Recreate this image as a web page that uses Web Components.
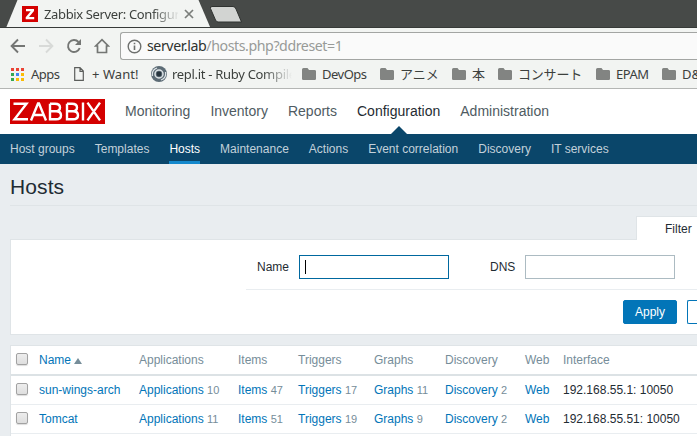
<!DOCTYPE html>
<html lang="en">
<head>
<meta charset="utf-8">
<title>Zabbix Server: Configuration of hosts</title>
<style>
html,body{margin:0;height:100%;overflow:hidden}
body{background:#e9edf0;font-family:"Liberation Sans",Arial,sans-serif;font-size:12px;color:#1f2c33}
</style>
</head>
<body>
<browser-chrome></browser-chrome>
<zbx-page></zbx-page>
<script>
function define(name, html) {
  const t = document.createElement('template');
  t.innerHTML = html;
  customElements.define(name, class extends HTMLElement {
    constructor() {
      super();
      this.attachShadow({mode: 'open'}).append(t.content.cloneNode(true));
    }
  });
}

define('tab-strip', `
<style>
:host{display:block;height:28px;overflow:hidden;background:#474a48;position:relative;box-sizing:border-box;border-bottom:1px solid #373a38}
svg.shape{position:absolute;left:0;top:0}
.tab{position:relative;display:flex;align-items:center;height:28px;padding-left:22px}
.title{margin-left:6px;width:134px;overflow:hidden;white-space:nowrap;font-size:13px;line-height:18px;letter-spacing:-.36px;color:#3c403d;-webkit-mask-image:linear-gradient(90deg,#000 108px,transparent 136px);mask-image:linear-gradient(90deg,#000 108px,transparent 136px)}
.close{margin-left:5px}
</style>
<svg class="shape" width="260" height="28"><path d="M6 28L17.500 0H198.500L210.500 28Z" fill="#f2f4f2"/><path d="M212 6.500H233Q235 6.500 236 9L241.500 22H218Q216.500 22 215.500 20L210.500 8.500Q210 6.500 212 6.500Z" fill="#d2d4d2" stroke="#2f3230"/></svg>
<div class="tab">
<svg width="16" height="16"><rect width="16" height="16" fill="#d40000"/><path d="M4 3H12V5L7 11H12.200V13.200H3.700V11.200L8.700 5.200H4Z" fill="#fff"/></svg>
<span class="title">Zabbix Server: Configuration</span>
<svg class="close" width="12" height="12"><path d="M2 2L10 10M10 2L2 10" stroke="#7b7e7b" stroke-width="1.700"/></svg>
</div>`);

define('nav-bar', `
<style>
:host{display:flex;align-items:center;height:36px;box-sizing:border-box;padding:0 0 0 10px}
.ic{flex:none;width:16px;height:16px;margin-right:12px}
.box{flex:1;min-width:0;height:28px;box-sizing:border-box;border:1px solid #a3a5a3;border-right:0;border-radius:3px 0 0 3px;background:#fafafa;display:flex;align-items:center;padding-left:6px;color:#2e3230;font-size:14.200px;letter-spacing:-.43px}
.box svg{margin-right:5px;flex:none}
.box span{white-space:nowrap;line-height:20px}
.dim{color:#989a98}
</style>
<svg class="ic" viewBox="0 0 16 16"><path d="M15 8H2M8 1.500L1.600 8L8 14.500" fill="none" stroke="#747674" stroke-width="1.900"/></svg>
<svg class="ic" viewBox="0 0 16 16"><path d="M1 8H14M8 1.500L14.400 8L8 14.500" fill="none" stroke="#d8dad8" stroke-width="1.900"/></svg>
<svg class="ic" viewBox="0 0 16 16"><path d="M13.700 10A6 6 0 1 1 12.500 4" fill="none" stroke="#747674" stroke-width="1.900"/><path d="M15 1V7H9Z" fill="#747674"/></svg>
<svg class="ic" style="margin-right:10px" viewBox="0 0 16 16"><path d="M3.500 8V14.500H12.500V8H14.300L8 1.700L1.700 8Z" fill="none" stroke="#747674" stroke-width="1.700"/></svg>
<div class="box"><svg width="15" height="15"><circle cx="7.500" cy="7.500" r="6.300" fill="none" stroke="#6e706e" stroke-width="1.400"/><path d="M7.500 6.500V11M7.500 3.700V5.300" stroke="#6e706e" stroke-width="1.600"/></svg><span>server.lab<span class="dim">/hosts.php?ddreset=1</span></span></div>`);

define('bookmark-item', `
<style>
:host{display:flex;align-items:center;flex:none;white-space:nowrap;overflow:hidden;box-sizing:border-box;line-height:18px}
::slotted(svg){flex:none}
</style>
<slot name="icon"></slot><slot></slot>`);

const folder = '<svg slot="icon" width="14" height="12" style="margin-right:6px"><path d="M1.500 0H5.500L7 2H12.500Q14 2 14 3.300V10.700Q14 12 12.700 12H1.300Q0 12 0 10.700V1.500Q0 0 1.500 0Z" fill="#828482"/></svg>';
let dots = '';
['#ea4335','#ea4335','#ea4335','#34a853','#4285f4','#fbbc05','#34a853','#fbbc05','#fbbc05'].forEach((c, i) => {
  dots += '<rect x="' + (i % 3) * 5 + '" y="' + Math.floor(i / 3) * 5 + '" width="3" height="3" fill="' + c + '"/>';
});
define('bookmark-bar', `
<style>
:host{display:flex;height:25px;box-sizing:border-box;padding:0 0 4px 11px;border-bottom:1px solid #b4b6b4;overflow:hidden;font-size:13px;color:#3c403d}
.fade{-webkit-mask-image:linear-gradient(90deg,#000 112px,transparent 141px);mask-image:linear-gradient(90deg,#000 112px,transparent 141px)}
.last{flex:1 1 0;min-width:0}
</style>
<bookmark-item style="width:63px"><svg slot="icon" width="13" height="13" style="margin-right:7px">${dots}</svg><span style="letter-spacing:-.55px">Apps</span></bookmark-item>
<bookmark-item style="width:77px"><svg slot="icon" width="10" height="14" style="margin-right:8px"><path d="M.7 .7H6L9.300 4V13.300H.7ZM6 .7V4.300H9.300" fill="none" stroke="#5c5e5c" stroke-width="1.200"/></svg><span style="letter-spacing:.05px">+ Want!</span></bookmark-item>
<bookmark-item class="fade" style="width:151px"><svg slot="icon" width="16" height="16" style="margin-right:5px"><circle cx="8" cy="8" r="8" fill="#5d6c76"/><circle cx="8" cy="8" r="4" fill="none" stroke="#dfe5e8" stroke-width="1.500"/><circle cx="8" cy="8" r="2.400" fill="#26343d"/><path d="M1.500 10Q.5 4 6 2M14.500 6Q15.500 12 10 14" fill="none" stroke="#dfe5e8" stroke-width="1.200"/></svg><span style="letter-spacing:-.3px">repl.it - Ruby Compiler</span></bookmark-item>
<bookmark-item style="width:78px">${folder}<span style="letter-spacing:-.5px">DevOps</span></bookmark-item>
<bookmark-item style="width:72px">${folder}<span>アニメ</span></bookmark-item>
<bookmark-item style="width:46px">${folder}<span>本</span></bookmark-item>
<bookmark-item style="width:98px">${folder}<span style="letter-spacing:-.2px">コンサート</span></bookmark-item>
<bookmark-item style="width:66px">${folder}<span style="letter-spacing:-.5px">EPAM</span></bookmark-item>
<bookmark-item class="last">${folder}<span>D&amp;D</span></bookmark-item>`);

define('browser-chrome', `
<style>:host{display:block;height:89px;background:#f2f4f2;font-family:"Noto Sans","Noto Sans CJK JP",sans-serif}</style>
<tab-strip></tab-strip><nav-bar></nav-bar><bookmark-bar></bookmark-bar>`);

define('main-menu', `
<style>
:host{display:flex;align-items:center;height:45px;background:#fff;padding-left:10px;font-size:14px;color:#4f5b62}
.logo{width:95px;height:25px;background:#d40000;margin-right:20px;flex:none}
a{margin-right:20px;white-space:nowrap;position:relative;line-height:45px}
.on{color:#1f2c33}
.on::after{content:"";position:absolute;left:50%;bottom:0;margin-left:-8px;border:8px solid transparent;border-top:0;border-bottom-color:#0a466a}
</style>
<svg class="logo" viewBox="0 0 95 25"><path d="M3.500 4.700H16.500L4.500 20.300H18M21 21.500L28 4.500H29L36 21.500M23.500 16H33.500M40 4.700V20.300H46Q51 20.300 51 16.300Q51 12.200 46 12.200H40M40 4.700H45Q50 4.700 50 8.400Q50 12.200 45 12.200M57 4.700V20.300H63Q68 20.300 68 16.300Q68 12.200 63 12.200H57M57 4.700H62Q67 4.700 67 8.400Q67 12.200 62 12.200M73 3.600V21.400M77.500 3.600L90 21.400M90 3.600L77.500 21.400" fill="none" stroke="#fff" stroke-width="2.400"/></svg>
<a>Monitoring</a><a>Inventory</a><a>Reports</a><a class="on">Configuration</a><a>Administration</a>`);

define('sub-menu', `
<style>
:host{display:flex;height:30px;background:#0a466a;padding-left:10px;color:#c3d1da}
a{margin-right:20px;white-space:nowrap;line-height:30px;box-sizing:border-box;height:30px}
.on{color:#fff;border-bottom:3px solid #1488cc}
</style>
<a>Host groups</a><a>Templates</a><a class="on">Hosts</a><a>Maintenance</a><a>Actions</a><a>Event correlation</a><a>Discovery</a><a>IT services</a>`);

define('page-title', `
<style>:host{display:block;height:41px;margin-left:10px;border-bottom:1px solid #dfe4e7}
h1{margin:0;font-size:21px;font-weight:400;line-height:46px;letter-spacing:.1px}</style>
<h1><slot></slot></h1>`);

define('field-box', `
<style>
:host{display:flex;align-items:center}
label{text-align:right;margin-right:10px}
.in{width:150px;height:24px;box-sizing:border-box;border:1px solid #acbbc2;background:#fff;padding:4px 5px}
:host([focused]) .in{border-color:#00689f}
:host([focused]) .in::before{content:"";display:block;width:1px;height:14px;background:#000}
</style>
<label><slot></slot></label><div class="in"></div>`);

define('filter-panel', `
<style>
:host{display:block;margin:10px 0 0 10px}
.tab{position:relative;margin-left:626px;height:24px;margin-bottom:-1px;box-sizing:border-box;border:1px solid #dfe4e7;border-bottom:0;border-right:0;background:#fff;padding-left:28px;line-height:25px}
.body{box-sizing:border-box;height:96px;border:1px solid #dfe4e7;border-right:0;background:#fff;padding-left:235px;overflow:hidden}
.row{display:flex;align-items:center;height:50px;padding:5px 0 0 11px;box-sizing:border-box;border-bottom:1px solid #e9edf0}
.second{margin-left:41px}
.btns{display:flex;gap:10px;padding:10px 0 0 377px;overflow:hidden}
.btn{flex:none;box-sizing:border-box;height:24px;border:1px solid #0275b8;border-radius:2px;line-height:22px;text-align:center;width:54px;background:#0275b8;color:#fff}
.alt{flex:1 1 0;min-width:0;width:auto;background:#fff;border-right:0;border-radius:2px 0 0 2px}
</style>
<div class="tab">Filter</div>
<div class="body"><div class="row"><field-box focused>Name</field-box><field-box class="second">DNS</field-box></div>
<div class="btns"><div class="btn">Apply</div><div class="btn alt"></div></div></div>`);

const box = '<i class="cb"></i>';
const row = (name, n, ip) => `<div class="r">${box}<a>${name}</a>` +
  ['Applications','Items','Triggers','Graphs','Discovery'].map((l, i) => `<span><a>${l}</a> <sup>${n[i]}</sup></span>`).join('') +
  `<a>Web</a><span>${ip}</span></div>`;
define('host-table', `
<style>
:host{display:block;margin:10px 0 0 10px;border:1px solid #dfe4e7;border-right:0;background:#fff;height:100px}
.r{display:grid;grid-template-columns:28px 100px 99px 60px 76px 71px 80px 38px 1fr;align-items:center;height:28px;border-bottom:1px solid #e9edf0;white-space:nowrap}
.h{border-bottom:2px solid #dce2e5;color:#768d99}
a{color:#0275b8}
sup{color:#768d99;font-size:11px;line-height:0;vertical-align:baseline}
.cb{display:block;width:12px;height:12px;box-sizing:border-box;border:1px solid #a2a2a2;border-radius:2px;background:linear-gradient(#ededed,#dedede);margin:-2px 0 0 5px;box-shadow:0 1px 1px #ddd}
.arr{display:inline-block;border:4px solid transparent;border-top:0;border-bottom:6px solid #768d99;margin-left:3px}
</style>
<div class="r h">${box}<span><a>Name</a><i class="arr"></i></span><span>Applications</span><span>Items</span><span>Triggers</span><span>Graphs</span><span>Discovery</span><span>Web</span><span>Interface</span></div>
${row('sun-wings-arch',[10,47,17,11,2],'192.168.55.1: 10050')}
${row('Tomcat',[11,51,19,9,2],'192.168.55.51: 10050')}`);

define('zbx-page', `
<style>:host{display:block}</style>
<main-menu></main-menu><sub-menu></sub-menu><page-title>Hosts</page-title><filter-panel></filter-panel><host-table></host-table>`);
</script>
</body>
</html>
